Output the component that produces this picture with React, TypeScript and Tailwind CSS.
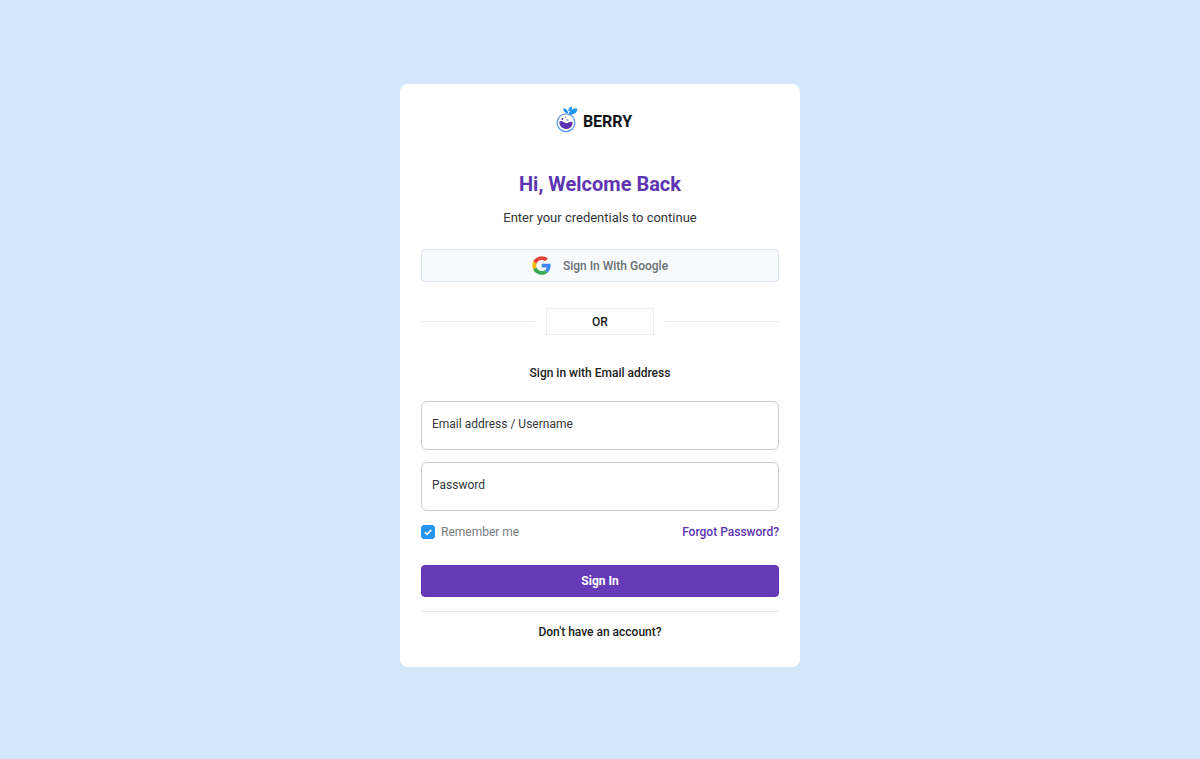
import { useState } from 'react';
import type { FormEvent } from 'react';

interface TextFieldProps {
  id: string;
  label: string;
  type: string;
  value: string;
  onChange: (value: string) => void;
}

function BerryLogo() {
  return (
    <svg className="w-[23px] h-[27px]" viewBox="0 0 23 27" fill="none" aria-hidden="true">
      <circle cx="10" cy="16.7" r="8.9" stroke="#5b95e6" strokeWidth="1.3" />
      <path
        d="M3.3 15.600c1.700-1.200 3.200-.3 4.600.7 1.700 1.200 3.200.9 4.600.1 1.300-.8 2.600-1 4.100-.5.2 4.200-2.700 7.100-6.600 7.100-3.900 0-6.800-3-6.700-7.400Z"
        fill="#5e35b1"
      />
      <circle cx="6.4" cy="13" r="1" fill="#5e35b1" />
      <circle cx="9.8" cy="11.3" r="0.7" fill="#7e57c2" />
      <circle cx="11.2" cy="14" r="0.8" fill="#7e57c2" />
      <path d="M12.700 8.300c.2-3.800 3.400-6.200 8.800-5.700-.3 4.400-4 7-8.800 5.700Z" fill="#2196f3" />
      <path d="M12.300 5.200c-.4-2.200.7-3.900 3.700-4.700.8 1.800-.4 4-3.700 4.700Z" fill="#2196f3" />
      <path d="M12.300 7.500C11.800 4.300 9.900 2.500 7 2.600c.5 3 2.300 4.700 5.300 4.900Z" fill="#1e88e5" />
    </svg>
  );
}

function GoogleIcon() {
  return (
    <svg className="w-[19px] h-[19px]" viewBox="0 0 48 48" aria-hidden="true">
      <path fill="#FBBC05" d="M10.5 24c0-1.6.3-3.1.8-4.6l-8.1-6.2C1.6 16.5.7 20.1.7 24s.9 7.5 2.5 10.8l8.1-6.2c-.5-1.5-.8-3-.8-4.6Z" />
      <path fill="#EA4335" d="M24.5 10.1c3.3 0 6.3 1.2 8.7 3.1l6.9-6.9C35.9 2.7 30.5.5 24.5.5 15.1.5 7.1 5.9 3.2 13.2l8.1 6.2c1.8-5.4 7-9.3 13.2-9.3Z" />
      <path fill="#34A853" d="M24.5 37.9c-6.2 0-11.4-3.9-13.2-9.3l-8.1 6.2c3.9 7.3 11.9 12.7 21.3 12.7 5.8 0 11.3-2 15.4-5.9l-7.7-5.9c-2.2 1.4-4.9 2.2-7.7 2.2Z" />
      <path fill="#4285F4" d="M47 24c0-1.4-.2-2.9-.6-4.3H24.5v9.1h12.6c-.6 3-2.3 5.4-4.9 6.9l7.7 5.9C44.3 37.5 47 31.3 47 24Z" />
    </svg>
  );
}

function TextField({ id, label, type, value, onChange }: TextFieldProps) {
  return (
    <div className="relative">
      <input
        id={id}
        type={type}
        value={value}
        placeholder=" "
        onChange={(e) => onChange(e.target.value)}
        className="peer block w-full h-[49px] px-[10px] rounded-md border border-[#cbcbcd] bg-white text-xs text-[#212121] outline-none focus:border-[#2196f3]"
      />
      <label
        htmlFor={id}
        className="absolute left-[11px] top-[13px] hidden text-xs leading-5 text-[#35373b] cursor-text peer-placeholder-shown:block"
      >
        {label}
      </label>
    </div>
  );
}

export default function App() {
  const [email, setEmail] = useState('');
  const [password, setPassword] = useState('');
  const [remember, setRemember] = useState(true);

  const handleSubmit = (e: FormEvent) => {
    e.preventDefault();
  };

  return (
    <div className="min-h-screen flex items-center justify-center bg-[#d4e6fa] px-4 pb-2 font-[Roboto,sans-serif] text-[#212121]">
      <main className="w-full max-w-[400px] rounded-lg bg-white px-[21px] pt-[22px] pb-[25px]">
        <a href="#" className="flex items-center justify-center gap-1 pr-3">
          <BerryLogo />
          <span className="pt-1 text-base leading-5 font-bold text-[#121417]">BERRY</span>
        </a>

        <h1 className="mt-[37px] text-center text-xl leading-7 font-bold text-[#5e35b1]">Hi, Welcome Back</h1>
        <p className="mt-[10px] text-center text-[13px] leading-5 text-[#33363a]">Enter your credentials to continue</p>

        <button
          type="button"
          className="mt-[21px] w-full h-[33px] flex items-center justify-center gap-3 rounded border border-[#dfe7f0] bg-[#f8fafc] text-xs font-medium text-[#697077]"
        >
          <GoogleIcon />
          Sign In With Google
        </button>

        <div className="mt-[26px] flex items-center">
          <div className="flex-1 border-t border-[#ebecee]" />
          <span className="mx-3 w-[108px] h-[27px] flex items-center justify-center border border-[#ebecee] text-xs font-medium">
            OR
          </span>
          <div className="flex-1 border-t border-[#ebecee]" />
        </div>

        <h2 className="mt-7 text-center text-xs leading-5 font-medium">Sign in with Email address</h2>

        <form onSubmit={handleSubmit} className="mt-[18px]">
          <div className="space-y-3">
            <TextField id="email" label="Email address / Username" type="email" value={email} onChange={setEmail} />
            <TextField id="password" label="Password" type="password" value={password} onChange={setPassword} />
          </div>

          <div className="mt-[11px] flex items-center justify-between text-xs leading-5">
            <label className="flex items-center gap-[6px] text-[#777a80]">
              <span className="grid place-items-center">
                <input
                  type="checkbox"
                  checked={remember}
                  onChange={(e) => setRemember(e.target.checked)}
                  className="peer col-start-1 row-start-1 w-[14px] h-[14px] appearance-none rounded-[3px] border border-[#9e9e9e] checked:border-[#2196f3] checked:bg-[#2196f3]"
                />
                <svg
                  className="col-start-1 row-start-1 w-[14px] h-[14px] pointer-events-none invisible peer-checked:visible"
                  viewBox="0 0 14 14"
                  fill="none"
                  stroke="white"
                  strokeWidth="1.8"
                  aria-hidden="true"
                >
                  <path d="m3.8 7.1 2.2 2.2 4.3-4.4" />
                </svg>
              </span>
              Remember me
            </label>
            <a href="#" className="font-medium text-[#5e35b1]">
              Forgot Password?
            </a>
          </div>

          <button
            type="submit"
            className="mt-[23px] block w-full h-8 rounded border border-[#5e35b1] bg-[#673ab7] text-xs font-bold text-white"
          >
            Sign In
          </button>
        </form>

        <div className="mt-[14px] border-t border-[#e3e5e8] pt-[10px] text-center text-xs leading-5 font-medium">
          <a href="#">Don't have an account?</a>
        </div>
      </main>
    </div>
  );
}
